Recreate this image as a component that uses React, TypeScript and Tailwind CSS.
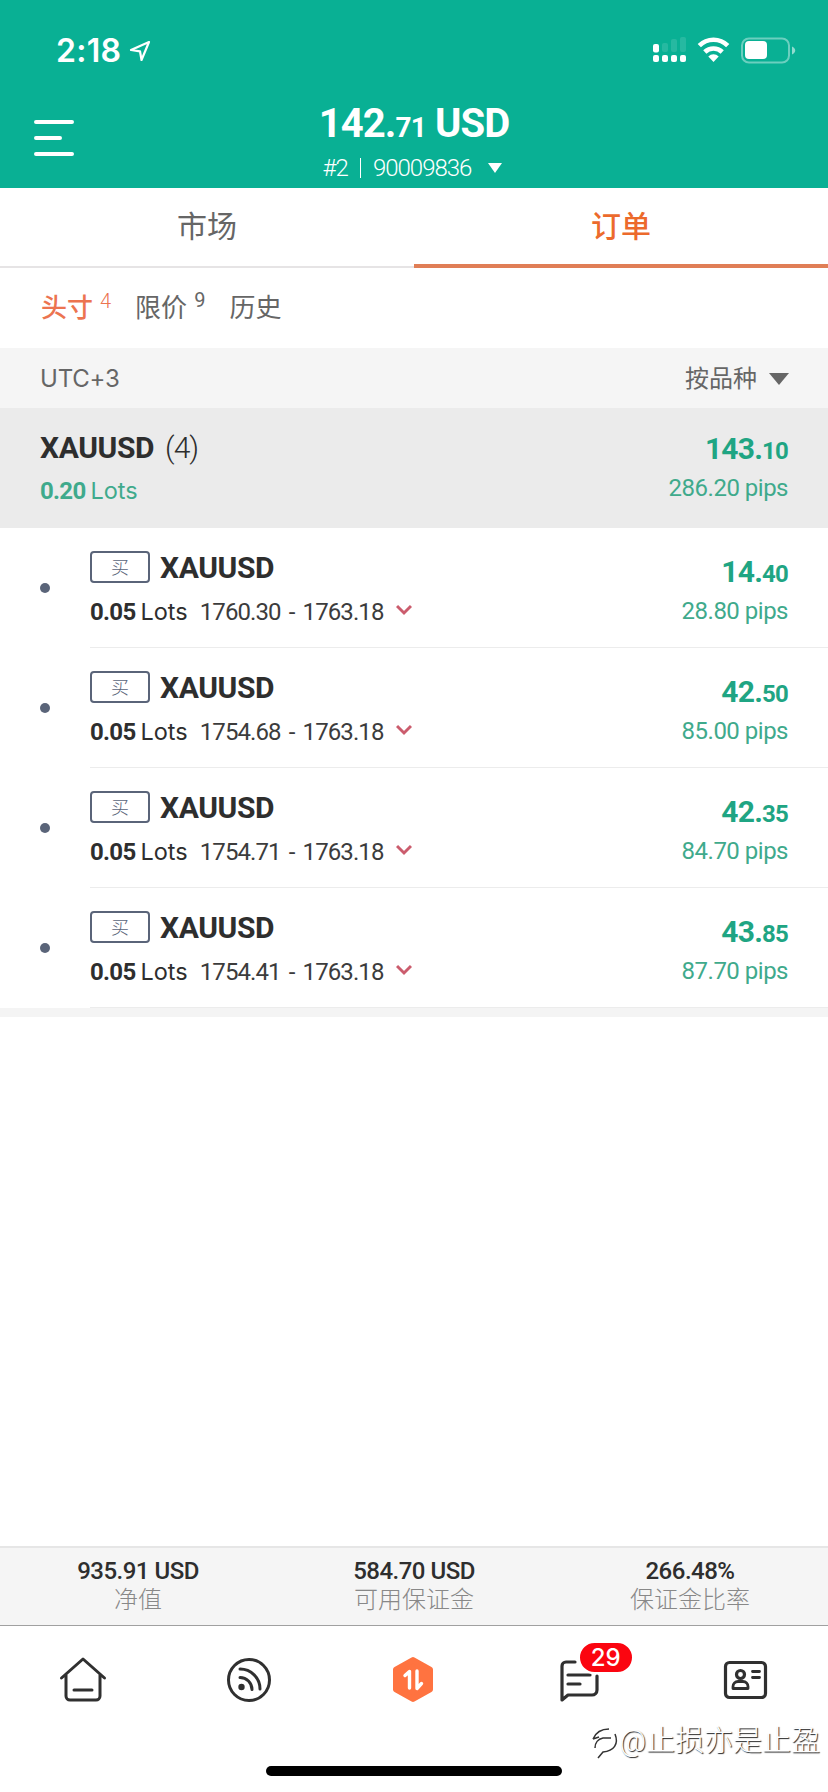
import type { ReactNode } from "react";

const orders = [
  { symbol: "XAUUSD", lots: "0.05", open: "1760.30", close: "1763.18", profit: "14.40", pips: "28.80" },
  { symbol: "XAUUSD", lots: "0.05", open: "1754.68", close: "1763.18", profit: "42.50", pips: "85.00" },
  { symbol: "XAUUSD", lots: "0.05", open: "1754.71", close: "1763.18", profit: "42.35", pips: "84.70" },
  { symbol: "XAUUSD", lots: "0.05", open: "1754.41", close: "1763.18", profit: "43.85", pips: "87.70" },
];

const stats = [
  { value: "935.91 USD", label: "净值" },
  { value: "584.70 USD", label: "可用保证金" },
  { value: "266.48%", label: "保证金比率" },
];

function StatusIcons() {
  return (
    <svg width="146" height="32" viewBox="0 0 146 32" fill="none">
      {/* signal */}
      <g fill="#fff">
        <rect x="2" y="9" width="6" height="8.500" rx="2" />
        <rect x="2" y="20" width="6" height="7" rx="2" />
        <rect x="11" y="20" width="6" height="7" rx="2" />
        <rect x="20" y="20" width="6" height="7" rx="2" />
        <rect x="29" y="20" width="6" height="7" rx="2" />
        <rect x="11" y="8" width="6" height="9" rx="2" opacity=".12" />
        <rect x="20" y="4" width="6" height="13" rx="2" opacity=".12" />
        <rect x="29" y="2" width="6" height="15" rx="2" opacity=".12" />
      </g>
      {/* wifi */}
      <g stroke="#fff" strokeWidth="4.600">
        <path d="M48.300 10.700a20 20 0 0 1 28.400 0" />
        <path d="M53.800 17a12.500 12.500 0 0 1 17.400 0" />
      </g>
      <path d="M57.300 21.400a7.500 7.500 0 0 1 10.400 0L62.500 27z" fill="#fff" />
      {/* battery */}
      <rect x="91" y="3.500" width="47" height="24" rx="7" stroke="#fff" strokeOpacity=".4" strokeWidth="2" />
      <rect x="94" y="6" width="22" height="18" rx="4" fill="#fff" />
      <path d="M141 11.500c2 .8 3.200 2.300 3.200 4s-1.200 3.200-3.200 4z" fill="#fff" fillOpacity=".55" />
    </svg>
  );
}

function Amount({ value }: { value: string }) {
  const [whole, cents] = value.split(".");
  return (
    <span className="text-[30px] leading-9 font-bold tracking-[-0.8px] text-[#1fa583]">
      {whole}.<span className="text-[24px]">{cents}</span>
    </span>
  );
}

function NavItem({ children }: { children: ReactNode }) {
  return <div className="flex flex-1 justify-center">{children}</div>;
}

export default function App() {
  return (
    <div className="flex h-[1792px] w-[828px] flex-col overflow-hidden bg-white font-['Roboto','Noto_Sans_CJK_SC',sans-serif] whitespace-nowrap text-[#2e2e2e]">
      {/* ヘッダー */}
      <header className="h-[188px] bg-[#09b094] text-white">
        <div className="flex h-[98px] items-center justify-between pt-[3px] pr-[31px] pl-[56px]">
          <div className="flex items-center gap-2">
            <span className="font-['Inter',sans-serif] text-[32px] leading-none font-semibold tracking-[0.3px]">2:18</span>
            <svg width="22" height="22" viewBox="0 0 22 22" fill="none" stroke="#fff" strokeWidth="2.200" strokeLinejoin="round">
              <path d="M20 2 2 10l9 1.300L12.500 20z" />
            </svg>
          </div>
          <StatusIcons />
        </div>
        <div className="grid grid-cols-[120px_1fr_120px]">
          <svg className="mt-[20px] ml-[33px]" width="42" height="40" viewBox="0 0 42 40" stroke="#fff" strokeWidth="4" strokeLinecap="round">
            <path d="M3 4h36M3 20h24M3 36h36" />
          </svg>
          <div className="flex flex-col items-center">
            <div className="pt-px text-[40px] leading-[50px] font-bold tracking-[-0.9px]">
              142.<span className="text-[28px]">71</span> USD
            </div>
            <div className="mr-[3px] flex items-center text-[24px] leading-[34px] font-light tracking-[-1px]">
              <span className="-mt-[2px]">#2</span>
              <span className="-mt-[3px] mr-[12px] ml-[12px] h-5 w-px bg-white" />
              <span className="-mt-[2px]">90009836</span>
              <svg className="-mt-[3px] ml-[17px]" width="14" height="10" viewBox="0 0 14 10">
                <path d="M0 0h14L7 10z" fill="#fff" />
              </svg>
            </div>
          </div>
        </div>
      </header>

      {/* メインタブ */}
      <div className="grid h-[80px] grid-cols-2 text-center text-[30px] leading-[78px]">
        <div className="h-[80px] border-b-2 border-[#e6e4e5] text-[#666]">市场</div>
        <div className="h-[80px] border-b-4 border-[#e07e56] font-medium text-[#ec6a2c]">订单</div>
      </div>

      {/* サブタブ */}
      <div className="flex h-[80px] items-center gap-[24px] pl-[41px] text-[26px] text-[#666]">
        <div className="flex font-medium text-[#ec7450]">
          头寸<span className="-mt-[3px] ml-[7px] text-[20px] font-light">4</span>
        </div>
        <div className="flex">
          限价<span className="-mt-[4px] ml-[7px] text-[20px] font-normal">9</span>
        </div>
        <div>历史</div>
      </div>

      <div className="flex h-[60px] items-center justify-between bg-[#f5f5f5] pt-[2px] pr-[39px] pl-[40px] text-[24px] text-[#666]">
        <span className="font-['Inter',sans-serif] tracking-[-0.2px]">UTC+3</span>
        <span className="flex items-center gap-3">
          按品种
          <svg width="20" height="12" viewBox="0 0 20 12">
            <path d="M0 0h20L10 12z" fill="#666" />
          </svg>
        </span>
      </div>

      {/* 銘柄サマリー */}
      <div className="flex h-[120px] justify-between bg-[#ebebeb] px-[40px] pt-[20px]">
        <div>
          <div className="text-[30px] leading-[40px]">
            <span className="font-bold tracking-[-0.4px]">XAUUSD</span>
            <span className="ml-[11px] font-light tracking-[-1px]">(4)</span>
          </div>
          <div className="mt-[3px] text-[24px] leading-[40px] text-[#3faa8c]">
            <span className="font-bold tracking-[-0.7px]">0.20</span>
            <span className="ml-[5px] font-['Inter',sans-serif] text-[23.5px] font-normal">Lots</span>
          </div>
        </div>
        <div className="flex flex-col items-end pt-[3px]">
          <Amount value="143.10" />
          <span className="text-[24px] leading-[39px] font-normal tracking-[-0.5px] text-[#3faa8c]">286.20 pips</span>
        </div>
      </div>

      {/* 注文一覧 */}
      {orders.map((order, index) => (
        <div key={index} className="flex h-[120px] pl-[40px]">
          <span className="mt-[55px] mr-[40px] size-[10px] rounded-full bg-[#5a6479]" />
          <div className="flex flex-1 justify-between border-b border-[#ececec] pr-[40px]">
            <div>
              <div className="flex items-center pt-[20px]">
                <span className="-mt-[2px] mr-[10px] flex h-[32px] w-[60px] items-center justify-center rounded-[4px] border-2 border-[#5a6479] text-[18px] font-light text-[#5a6479]">
                  买
                </span>
                <span className="text-[30px] leading-[40px] font-bold tracking-[-0.4px]">{order.symbol}</span>
              </div>
              <div className="mt-[4px] flex items-center text-[24px] leading-[40px]">
                <span className="font-bold tracking-[-0.7px]">{order.lots}</span>
                <span className="ml-[5px] font-['Inter',sans-serif] text-[23.5px] font-normal">Lots</span>
                <span className="ml-[12px] font-normal tracking-[-0.9px] text-[#3c3c3c] [word-spacing:3px]">{order.open} - {order.close}</span>
                <svg className="-mt-[4px] ml-[12px]" width="16" height="12" viewBox="0 0 16 12" fill="none" stroke="#cb5c6d" strokeWidth="3">
                  <path d="M1 2l7 7 7-7" />
                </svg>
              </div>
            </div>
            <div className="flex flex-col items-end pt-[26px]">
              <Amount value={order.profit} />
              <span className="text-[24px] leading-[39px] font-normal tracking-[-0.5px] text-[#3faa8c]">{order.pips} pips</span>
            </div>
          </div>
        </div>
      ))}
      <div className="h-[9px] bg-[#f4f4f4]" />

      {/* 口座情報 */}
      <div className="mt-auto grid h-[80px] grid-cols-3 border-t-2 border-b border-t-[#e6e6e6] border-b-[#a0a0a0] bg-[#f5f5f5] pt-[8px] text-center text-[24px]">
        {stats.map((stat) => (
          <div key={stat.label}>
            <div className="leading-[30px] font-medium tracking-[-0.5px]">{stat.value}</div>
            <div className="leading-[28px] font-light text-[#888]">{stat.label}</div>
          </div>
        ))}
      </div>

      {/* ボトムナビ */}
      <nav className="relative h-[166px]">
        <div className="flex pt-[29px]">
          <NavItem>
            <svg width="50" height="50" viewBox="0 0 50 50" fill="none" stroke="#303030" strokeWidth="3" strokeLinecap="round" strokeLinejoin="round">
              <path d="M3.500 23 25 4l21.500 19M8 20v21a4 4 0 0 0 4 4h26a4 4 0 0 0 4-4V20M16 35h18" />
            </svg>
          </NavItem>
          <NavItem>
            <svg width="50" height="50" viewBox="0 0 50 50" fill="none" stroke="#303030" strokeWidth="3" strokeLinecap="round">
              <circle cx="26" cy="25" r="20.500" />
              <path d="M17 14a20 20 0 0 1 20 20M17 22.500a12 12 0 0 1 12 12" />
              <circle cx="18.500" cy="32" r="3.200" fill="#303030" stroke="none" />
            </svg>
          </NavItem>
          <NavItem>
            <svg width="50" height="50" viewBox="0 0 50 50">
              <path d="M24 5 41 14.500v20L24 44 7 34.500v-20z" fill="#ff7340" stroke="#ff7340" strokeWidth="6" strokeLinejoin="round" />
              <path d="M16 20.500l4.500-4V33M28 16v17.500l4.500-5" fill="none" stroke="#fff" strokeWidth="3.400" strokeLinecap="round" strokeLinejoin="round" />
            </svg>
          </NavItem>
          <NavItem>
            <div className="relative">
              <svg width="50" height="50" viewBox="0 0 50 50" fill="none" stroke="#303030" strokeWidth="3.200" strokeLinecap="round" strokeLinejoin="round">
                <path d="M20 7H11a4 4 0 0 0-4 4v34l6-5h24a5 5 0 0 0 5-5V21M13 20h22M13 29h12" />
              </svg>
              <span className="absolute top-[-14px] left-[23px] flex h-[33px] w-[56px] items-center justify-center rounded-full border-2 border-white bg-[#fb0510] font-['Inter',sans-serif] text-[24px] font-medium text-white">
                29
              </span>
            </div>
          </NavItem>
          <NavItem>
            <svg width="50" height="50" viewBox="0 0 50 50" fill="none" stroke="#303030" strokeWidth="3.200" strokeLinecap="round" strokeLinejoin="round">
              <rect x="5.500" y="7.500" width="40" height="35" rx="4" />
              <circle cx="20.500" cy="19.500" r="4" />
              <path d="M13 33.500v-2a5 5 0 0 1 5-5h5a5 5 0 0 1 5 5v2zM32.500 16.500h7M32.500 22.500h7" strokeWidth="2.800" />
            </svg>
          </NavItem>
        </div>
        <div className="absolute top-[140px] left-[266px] h-[10px] w-[296px] rounded-full bg-black" />
        <div className="absolute top-[95px] right-[8px] flex items-center text-[29px] leading-[40px] font-light text-white [text-shadow:1px_1px_1px_#222]">
          <svg className="mt-[4px] mr-[1px]" width="28" height="34" viewBox="0 0 28 34" fill="none" stroke="#333" strokeWidth="1.500">
            <path d="M2 13c3-7 8-10 16-10M2 13l6-2M4 22c0-5 3-9 8-10h8M24 8c4 10-1 17-12 18l-5 6" />
          </svg>
          @止损亦是止盈
        </div>
      </nav>
    </div>
  );
}
